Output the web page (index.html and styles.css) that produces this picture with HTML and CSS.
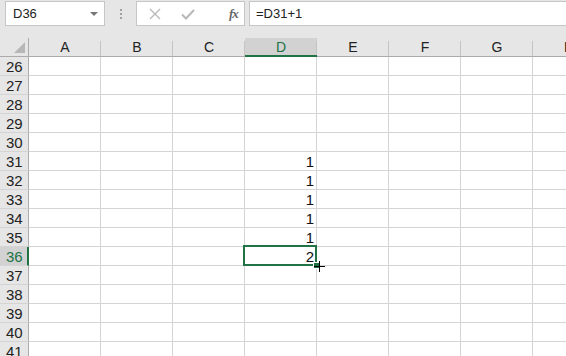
FILE: index.html
```html
<!DOCTYPE html>
<html lang="en">
<head>
    <meta charset="UTF-8">
    <title>Sheet1</title>
    <link rel="stylesheet" href="styles.css">
</head>
<body>
    <div class="formula-bar">
        <div class="name-box">
            <span>D36</span>
            <span class="name-arrow"></span>
        </div>
        <div class="grip"><i></i><i></i><i></i></div>
        <div class="fx-buttons">
            <svg class="fx-icon" width="12" height="12" viewBox="0 0 12 12"><path d="M1 1L11 11M11 1L1 11" stroke="#b8b8b8" stroke-width="1.3" fill="none"/></svg>
            <svg class="fx-icon" width="14" height="12" viewBox="0 0 14 12"><path d="M1 6.5L5 10.5L13 2" stroke="#b8b8b8" stroke-width="2" fill="none"/></svg>
            <span class="fx-label">fx</span>
        </div>
        <div class="formula-input">=D31+1</div>
    </div>

    <div class="sheet" id="sheet">
        <div class="corner"><span class="corner-tri"></span></div>
        <div class="col-head">A</div>
        <div class="col-head">B</div>
        <div class="col-head">C</div>
        <div class="col-head active">D</div>
        <div class="col-head">E</div>
        <div class="col-head">F</div>
        <div class="col-head">G</div>
        <div class="col-head">H</div>
    </div>

    <script src="script.js"></script>
</body>
</html>
```

FILE: styles.css
```css
body {
    margin: 0;
    background-color: #ffffff;
    font-family: "Liberation Sans", Arial, sans-serif;
    overflow: hidden;
    width: 566px;
    height: 356px;
}

.formula-bar {
    height: 38px;
    background-color: #e6e6e6;
    display: flex;
    align-items: flex-start;
    padding-top: 1px;
    box-sizing: border-box;
}

.name-box {
    margin-left: 5px;
    width: 100px;
    height: 25px;
    background-color: #fff;
    border: 1px solid #c6c6c6;
    display: flex;
    align-items: center;
    justify-content: space-between;
    padding: 0 6px 0 7px;
    box-sizing: border-box;
    font-size: 13px;
    color: #222;
}

.name-arrow {
    width: 0;
    height: 0;
    border-left: 4px solid transparent;
    border-right: 4px solid transparent;
    border-top: 4px solid #777;
}

.grip {
    width: 31px;
    height: 26px;
    display: flex;
    flex-direction: column;
    align-items: center;
    justify-content: center;
    gap: 2px;
}

.grip i {
    width: 2px;
    height: 2px;
    background-color: #a0a0a0;
}

.fx-buttons {
    width: 109px;
    height: 25px;
    background-color: #fff;
    border: 1px solid #c6c6c6;
    box-sizing: border-box;
    display: flex;
    align-items: center;
    padding-left: 12px;
    gap: 20px;
}

.fx-label {
    margin-left: 14px;
    font-family: "Liberation Serif", serif;
    font-style: italic;
    font-weight: bold;
    font-size: 13px;
    color: #666;
    letter-spacing: -1px;
}

.formula-input {
    margin-left: 4px;
    flex: 1;
    height: 25px;
    background-color: #fff;
    border: 1px solid #c6c6c6;
    border-right: none;
    box-sizing: border-box;
    padding-left: 6px;
    font-size: 13px;
    line-height: 23px;
    color: #222;
}

.sheet {
    display: grid;
    grid-template-columns: 29px repeat(8, 72px);
    grid-auto-rows: 19px;
}

.corner, .col-head {
    background-color: #e6e6e6;
    border-bottom: 1px solid #ababab;
    box-sizing: border-box;
}

.corner {
    border-right: 1px solid #ababab;
    position: relative;
}

.corner-tri {
    position: absolute;
    right: 3px;
    bottom: 3px;
    width: 0;
    height: 0;
    border-left: 11px solid transparent;
    border-bottom: 11px solid #b7b7b7;
}

.col-head {
    position: relative;
    text-align: center;
    font-size: 14px;
    line-height: 19px;
    color: #222;
}

.col-head::after {
    content: "";
    position: absolute;
    right: 0;
    top: 3px;
    bottom: 0;
    width: 1px;
    background-color: #c4c4c4;
}

.col-head.active {
    background-color: #d2d2d2;
    color: #217346;
    border-bottom: 2px solid #217346;
    line-height: 18px;
}

.row-head {
    background-color: #e6e6e6;
    border-right: 1px solid #ababab;
    border-bottom: 1px solid #d4d4d4;
    box-sizing: border-box;
    font-size: 15px;
    line-height: 19px;
    text-align: left;
    padding-left: 6px;
    color: #222;
}

.row-head.active {
    background-color: #d2d2d2;
    color: #217346;
    border-right: 2px solid #217346;
}

.cell {
    border-right: 1px solid #d4d4d4;
    border-bottom: 1px solid #d4d4d4;
    box-sizing: border-box;
    text-align: right;
    padding-right: 2px;
    font-size: 15px;
    line-height: 20px;
    color: #111;
    position: relative;
}

.cell.selected::before {
    content: "";
    position: absolute;
    left: -2px;
    top: -2px;
    right: -1px;
    bottom: -1px;
    border: 2px solid #217346;
}

.fill-handle {
    position: absolute;
    right: -4px;
    bottom: -4px;
    width: 5px;
    height: 5px;
    background-color: #217346;
    border: 1px solid #fff;
    z-index: 2;
}

.cross {
    position: absolute;
    right: -9px;
    bottom: -7px;
    z-index: 3;
}
```

FILE: script.js
```js
// build rows 26-41
const sheet = document.getElementById('sheet');
const values = { 31: '1', 32: '1', 33: '1', 34: '1', 35: '1', 36: '2' };

for (let r = 26; r <= 41; r++) {
    const head = document.createElement('div');
    head.className = r === 36 ? 'row-head active' : 'row-head';
    head.textContent = r;
    sheet.appendChild(head);

    for (let c = 0; c < 8; c++) {
        const cell = document.createElement('div');
        cell.className = 'cell';
        if (c === 3 && values[r]) {
            cell.textContent = values[r];
        }
        if (c === 3 && r === 36) {
            cell.classList.add('selected');
            cell.innerHTML += '<span class="fill-handle"></span>' +
                '<svg class="cross" width="11" height="11" viewBox="0 0 11 11"><path d="M5.5 0V11M0 5.5H11" stroke="#000" stroke-width="1"/></svg>';
        }
        sheet.appendChild(cell);
    }
}
```
